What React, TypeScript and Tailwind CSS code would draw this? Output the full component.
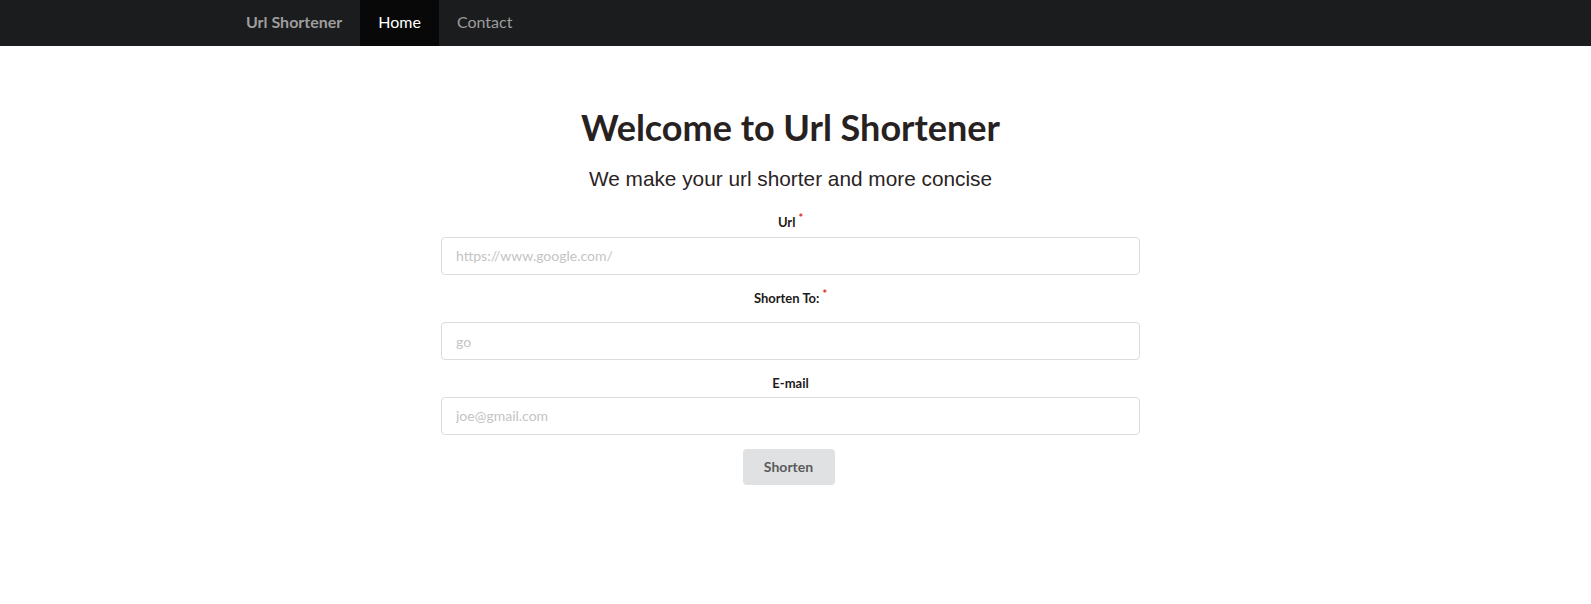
const font = { fontFamily: "Lato, 'Noto Sans', sans-serif" };

function Field({
  label,
  required,
  placeholder,
  gapClass,
}: {
  label: string;
  required?: boolean;
  placeholder: string;
  gapClass: string;
}) {
  return (
    <div className="flex flex-col">
      <label className={`block text-center text-[13px] font-bold leading-[18.5px] text-[#1f1a1a] ${gapClass}`}>
        {label}
        {required ? (
          <span className="relative top-[-5px] ml-[3px] text-[11px] text-[#db2828]">*</span>
        ) : null}
      </label>
      <input
        type="text"
        placeholder={placeholder}
        className="h-[38px] w-full rounded-[4px] border border-[#dcdcdc] bg-white px-[14px] text-[14px] text-[#222] outline-none placeholder:text-[#c4c4c4]"
      />
    </div>
  );
}

export default function App() {
  return (
    <div className="min-h-[604px] bg-white" style={font}>
      <nav className="h-[46px] bg-[#1b1c1d]">
        <div className="mx-auto flex h-full w-[1127px] translate-x-[-4px] items-stretch text-[16px]">
          <a className="flex items-center px-[18px] pb-[3px] font-bold text-[#9d9d9d]">Url Shortener</a>
          <a className="flex items-center bg-[#080808] px-[18px] pb-[3px] text-white">Home</a>
          <a className="flex items-center px-[18px] pb-[3px] text-[#9d9d9d]">Contact</a>
        </div>
      </nav>

      <main className="mr-[10px] flex flex-col items-center pt-[58px]">
        <h1 className="text-[36px] font-bold leading-[46px] text-[#27221f]">
          Welcome to Url Shortener
        </h1>
        <p
          className="mt-[15px] text-[20.8px] leading-[28px] text-[#2a2323]"
          style={{ fontFamily: "'Liberation Sans', Arial, sans-serif" }}
        >
          We make your url shorter and more concise
        </p>

        <form className="mt-[20px] flex w-[699px] flex-col">
          <Field label="Url" required placeholder="https://www.google.com/" gapClass="mb-[4px]" />
          <div className="mt-[14px]">
            <Field label="Shorten To:" required placeholder="go" gapClass="mb-[14px]" />
          </div>
          <div className="mt-[14px]">
            <Field label="E-mail" placeholder="joe@gmail.com" gapClass="mb-[4px]" />
          </div>
          <div className="mt-[14px] flex justify-center">
            <button
              type="button"
              className="mr-[4px] h-[36px] w-[92px] rounded-[4px] bg-[#e0e1e2] text-[14px] font-bold text-[#5a5a5a]"
            >
              Shorten
            </button>
          </div>
        </form>
      </main>
    </div>
  );
}
